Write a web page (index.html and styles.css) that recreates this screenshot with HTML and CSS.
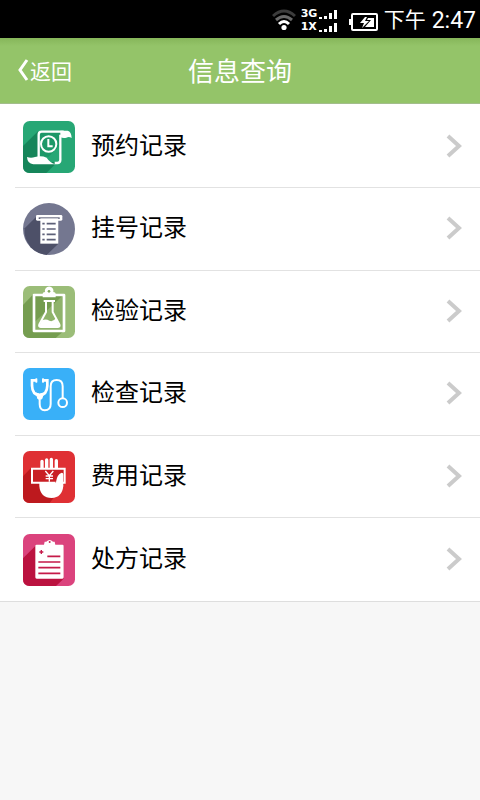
FILE: index.html
```html
<!DOCTYPE html>
<html lang="zh-CN">
<head>
<meta charset="utf-8">
<meta name="viewport" content="width=device-width, initial-scale=1">
<title>信息查询</title>
<link rel="stylesheet" href="styles.css">
</head>
<body>
<div class="status">
  <svg class="wifi" viewBox="0 0 24 22" aria-hidden="true">
    <g fill="none" stroke-width="3">
      <path d="M1 7Q12-3 23 7" stroke="#3c3c3c"/>
      <path d="M4 11Q12 4 20 11" stroke="#696969"/>
      <path d="M7 15Q12 10 17 15" stroke="#fff"/>
    </g>
    <circle cx="12" cy="18.500" r="2.600" fill="#fff"/>
  </svg>
  <div class="networks">
    <div class="network"><span>3G</span><svg class="bars" viewBox="0 0 18 9" aria-hidden="true"><path d="M0 7h3v2H0zM5 6h3v3H5zM10 3h3v6h-3zM15 0h3v9h-3z"/></svg></div>
    <div class="network"><span>1X</span><svg class="bars" viewBox="0 0 18 9" aria-hidden="true"><path d="M0 7h3v2H0zM5 6h3v3H5zM10 3h3v6h-3zM15 0h3v9h-3z"/></svg></div>
  </div>
  <svg class="battery" viewBox="0 0 29 18" aria-hidden="true">
    <rect x="3" y="1" width="25" height="16" rx="1" fill="none" stroke="#fff" stroke-width="2"/>
    <path d="M0 6h3v6H0zM19 5h6v9h-9l6-7h-4z" fill="#fff"/>
    <path d="M16 4l-5 6h4l-2 5 7-7h-4l2-4z" fill="#fff"/>
  </svg>
  <span class="period">下午</span>
  <time class="clock" datetime="14:47">2:47</time>
</div>
<header class="bar">
  <a class="back" href="#"><svg viewBox="0 0 12 22" aria-hidden="true"><path d="M10 1L3 11l7 10" fill="none" stroke="#fff" stroke-width="3"/></svg>返回</a>
  <h1 class="title">信息查询</h1>
</header>
<main>
<ul class="list">
  <li class="item"><a class="link" href="#">
    <svg class="icon" viewBox="27 27 156 156" aria-hidden="true">
      <rect x="27" y="27" width="156" height="156" rx="20" fill="#27a775"/>
      <path d="M72 58L27 102v61q0 20 20 20h50l45-44V80L95 57z" fill="#16855a"/>
      <path d="M76 58H142V150H76z" fill="#27a775"/>
      <path d="M76 58V134H104L142 96V62z" fill="#1d9868"/>
      <path d="M74 138V68q0-9 9-9h66M139 68v76q0 9-9 9h-8" fill="none" stroke="#fff" stroke-width="7"/>
      <path d="M139 56h22q11 2 12 22-8-5-16-1-8 3-18-1zM39 135q12 4 24 0 19-5 35 2 10 16 27 20H58q-18-2-19-22z" fill="#fff"/>
      <circle cx="104" cy="96" r="23" fill="#1d9868" stroke="#fff" stroke-width="6"/>
      <path d="M103 81v22h13" fill="none" stroke="#fff" stroke-width="6"/>
    </svg>
    <span class="label">预约记录</span>
    <svg class="arrow" viewBox="0 0 16 24" aria-hidden="true"><path d="M2 2l11 10L2 22"/></svg>
  </a></li>
  <li class="item"><a class="link" href="#">
    <svg class="icon" viewBox="27 24 156 156" aria-hidden="true">
      <circle cx="105" cy="102" r="78" fill="#747790"/>
      <path d="M66 66L32 100Q28 128 50 157 70 177 98 180L133 146V66z" fill="#4d5068"/>
      <rect x="66" y="60" width="79" height="17" rx="4" fill="#fff"/>
      <path d="M74 67h63v5H74z" fill="#5f627a"/>
      <path d="M79 70h54v76H79z" fill="#fff"/>
      <path d="M98 86h27M98 102h27M98 118h27M98 134h27M85 86h7M85 102h7M85 118h7M85 134h7" stroke="#5d6078" stroke-width="5"/>
    </svg>
    <span class="label">挂号记录</span>
    <svg class="arrow" viewBox="0 0 16 24" aria-hidden="true"><path d="M2 2l11 10L2 22"/></svg>
  </a></li>
  <li class="item"><a class="link" href="#">
    <svg class="icon" viewBox="27 27 156 156" aria-hidden="true">
      <rect x="27" y="27" width="156" height="156" rx="20" fill="#9bbd78"/>
      <path d="M58 52L27 84v79q0 20 20 20h78l27-24V52z" fill="#759d50"/>
      <path d="M62 135L150 52v108H62z" fill="#8fb36b"/>
      <path d="M60 54H150V162H60z" fill="none" stroke="#fff" stroke-width="8" stroke-linejoin="round"/>
      <path d="M86 61V50q0-5 7-5a13 13 0 1 1 25 0q7 0 7 5v11z" fill="#fff"/>
      <circle cx="105" cy="43" r="4" fill="#7fa65b"/>
      <path d="M89 72h34M96 74v31l-20 37q-3 8 6 8h48q9 0 6-8l-20-37V74" fill="none" stroke="#fff" stroke-width="6"/>
      <path d="M84 130q12-6 22 1 10 5 20-7l10 22-5 6H80l-4-6z" fill="#fff"/>
    </svg>
    <span class="label">检验记录</span>
    <svg class="arrow" viewBox="0 0 16 24" aria-hidden="true"><path d="M2 2l11 10L2 22"/></svg>
  </a></li>
  <li class="item"><a class="link" href="#">
    <svg class="icon" viewBox="27 25 156 156" aria-hidden="true">
      <rect x="27" y="25" width="156" height="156" rx="20" fill="#39b0f8"/>
      <g fill="none" stroke="#fff">
        <path d="M67 62H54V78Q55 106 77 106T100 78V62H87" stroke-width="8"/>
        <path d="M66 100q11 7 23 0l-6 18H72z" fill="#fff" stroke-width="3"/>
        <path d="M77 112v21q0 19 15 19 18 0 18-19V80q0-19 18-19t18 19v35" stroke-width="6"/>
        <circle cx="146" cy="129" r="13" fill="#39b0f8" stroke-width="6"/>
      </g>
      <rect x="64" y="56" width="6" height="13" rx="2" fill="#fff"/><rect x="84" y="56" width="6" height="13" rx="2" fill="#fff"/>
    </svg>
    <span class="label">检查记录</span>
    <svg class="arrow" viewBox="0 0 16 24" aria-hidden="true"><path d="M2 2l11 10L2 22"/></svg>
  </a></li>
  <li class="item"><a class="link" href="#">
    <svg class="icon" viewBox="27 27 156 156" aria-hidden="true">
      <rect x="27" y="27" width="156" height="156" rx="20" fill="#df3034"/>
      <path d="M51 78L27 103v60q0 20 20 20h60l46-60V78z" fill="#bd191e"/>
      <path d="M84 58v22M98 54v26M112 52v28M127 56v24" stroke="#fff" stroke-width="10" stroke-linecap="round"/>
      <path d="M76 122h50q3-26 17-30l5 5v35q-4 35-35 36-34 0-37-36z" fill="#fff"/>
      <path d="M54 80h98v42h-6V95q-17 4-20 27H54z" fill="#c91f24"/>
      <path d="M145 122h7V80H54v42h71" fill="none" stroke="#fff" stroke-width="6"/>
      <path d="M126 124q2-28 17-32 5 0 5 6v28z" fill="#fff"/>
      <path d="M94 87l12 14 12-14M106 101v18M95 102h22M95 110h22" fill="none" stroke="#fff" stroke-width="4"/>
    </svg>
    <span class="label">费用记录</span>
    <svg class="arrow" viewBox="0 0 16 24" aria-hidden="true"><path d="M2 2l11 10L2 22"/></svg>
  </a></li>
  <li class="item"><a class="link" href="#">
    <svg class="icon" viewBox="27 25 156 156" aria-hidden="true">
      <rect x="27" y="25" width="156" height="156" rx="20" fill="#db437d"/>
      <path d="M65 60L27 98v63q0 20 20 20h79l23-22V60z" fill="#bb123f"/>
      <path d="M68 57h22l2-9h5q10-10 20 0h5l2 9h21q4 0 4 4v94q0 4-4 4H68q-4 0-4-4V61q0-4 4-4z" fill="#fff"/>
      <circle cx="107" cy="49" r="3" fill="#c52655"/>
      <path d="M76 79h12M82 73v12" stroke="#c51a49" stroke-width="4"/>
      <path d="M100 92h39M73 109h66M73 126h66M73 143h66" stroke="#c51a49" stroke-width="5"/>
    </svg>
    <span class="label">处方记录</span>
    <svg class="arrow" viewBox="0 0 16 24" aria-hidden="true"><path d="M2 2l11 10L2 22"/></svg>
  </a></li>
</ul>
</main>
</body>
</html>
```
FILE: styles.css
```css
* { box-sizing: border-box; }

body {
  margin: 0;
  background: #f7f7f7;
  color: #000;
  font-family: Roboto, "Noto Sans CJK SC", sans-serif;
}

a { color: inherit; text-decoration: none; }
svg { display: block; flex: none; }

.status {
  display: flex;
  align-items: center;
  justify-content: flex-end;
  height: 38px;
  padding: 2px 4px 0 0;
  background: #000;
  color: #fff;
}

.wifi { width: 24px; height: 22px; margin-right: 5px; }
.networks { display: grid; gap: 3px; margin-right: 12px; }
.network {
  display: flex;
  align-items: flex-end;
  gap: 2px;
  height: 10px;
  font: bold 11px/10px "DejaVu Sans", sans-serif;
}
.network span { width: 16px; }
.bars { width: 18px; height: 9px; fill: #fff; }
.battery { width: 29px; height: 18px; margin: 4px 6px 0 0; }
.period { margin-right: 6px; font-size: 21px; line-height: 36px; }
.clock { padding-top: 2px; font-size: 23px; line-height: 36px; }

.bar {
  display: grid;
  grid-template-columns: 1fr auto 1fr;
  align-items: center;
  height: 66px;
  padding-bottom: 2px;
  background: linear-gradient(#86b65a, #94c469 8px);
  border-bottom: 1px solid #a3bd8c;
  color: #fff;
}

.back {
  display: flex;
  align-items: center;
  gap: 1px;
  padding-left: 17px;
  font-size: 21px;
}
.back svg { width: 12px; height: 22px; }

.title { margin: 0; font-size: 26px; font-weight: 400; }

.list {
  margin: 0;
  padding: 2px 0 0 15px;
  list-style: none;
  background: #fff;
  border-bottom: 1px solid #dedede;
}

.item { height: 82px; border-bottom: 1px solid #e2e2e2; }
.item:nth-child(even) { height: 83px; }
.item:last-child { border-bottom: 0; }

.link {
  display: flex;
  align-items: center;
  height: 100%;
  padding: 0 18px 0 8px;
}

.icon { width: 52px; height: 52px; }

.label {
  flex: 1;
  padding-bottom: 7px;
  margin-left: 16px;
  font-size: 24px;
}

.arrow {
  width: 16px;
  height: 24px;
  margin-bottom: 2px;
  fill: none;
  stroke: #cbcbcb;
  stroke-width: 4;
}
```
